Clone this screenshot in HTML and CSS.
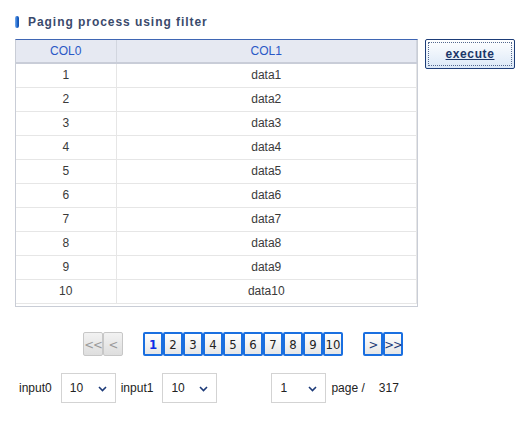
FILE: index.html
```html
<!DOCTYPE html>
<html>
<head>
<meta charset="utf-8">
<link rel="stylesheet" href="styles.css">
</head>
<body>
<div class="page">
  <h1 class="title"><span class="title-mark"></span>Paging process using filter</h1>
  <div class="main">
    <div class="grid">
      <table>
        <thead>
          <tr><th class="c0">COL0</th><th class="c1">COL1</th></tr>
        </thead>
        <tbody>
          <tr><td>1</td><td>data1</td></tr>
          <tr><td>2</td><td>data2</td></tr>
          <tr><td>3</td><td>data3</td></tr>
          <tr><td>4</td><td>data4</td></tr>
          <tr><td>5</td><td>data5</td></tr>
          <tr><td>6</td><td>data6</td></tr>
          <tr><td>7</td><td>data7</td></tr>
          <tr><td>8</td><td>data8</td></tr>
          <tr><td>9</td><td>data9</td></tr>
          <tr><td>10</td><td>data10</td></tr>
        </tbody>
      </table>
    </div>
    <button class="execute"><span class="execute-inner">execute</span></button>
  </div>
  <div class="pager">
    <div class="pbtn nav off">&lt;&lt;</div>
    <div class="pbtn nav off">&lt;</div>
    <div class="pages">
      <div class="pbtn sel">1</div>
      <div class="pbtn">2</div>
      <div class="pbtn">3</div>
      <div class="pbtn">4</div>
      <div class="pbtn">5</div>
      <div class="pbtn">6</div>
      <div class="pbtn">7</div>
      <div class="pbtn">8</div>
      <div class="pbtn">9</div>
      <div class="pbtn">10</div>
    </div>
    <div class="pbtn nav on">&gt;</div>
    <div class="pbtn nav on">&gt;&gt;</div>
  </div>
  <div class="controls">
    <span class="label">input0</span>
    <div class="combo"><span>10</span><svg class="chev" width="9" height="6" viewBox="0 0 9 6"><path d="M1 1 L4.5 4.5 L8 1" fill="none" stroke="#1c3a78" stroke-width="1.6"/></svg></div>
    <span class="label l2">input1</span>
    <div class="combo"><span>10</span><svg class="chev" width="9" height="6" viewBox="0 0 9 6"><path d="M1 1 L4.5 4.5 L8 1" fill="none" stroke="#1c3a78" stroke-width="1.6"/></svg></div>
    <div class="combo pagecombo"><span>1</span><svg class="chev" width="9" height="6" viewBox="0 0 9 6"><path d="M1 1 L4.5 4.5 L8 1" fill="none" stroke="#1c3a78" stroke-width="1.6"/></svg></div>
    <span class="label pg">page /</span>
    <span class="label total">317</span>
  </div>
</div>
</body>
</html>
```

FILE: styles.css
```css
* { box-sizing: border-box; }
body {
  margin: 0;
  background: #fff;
  font-family: "Liberation Sans", Arial, sans-serif;
  font-size: 12px;
  color: #333;
}
.page {
  padding: 15px 0 0 15px;
}
.title {
  margin: 0;
  display: flex;
  align-items: center;
  height: 14px;
  font-size: 12px;
  font-weight: bold;
  letter-spacing: 0.95px;
  color: #3a4a6c;
}
.title-mark {
  width: 4px;
  height: 12px;
  margin-right: 9px;
  border-radius: 2px;
  background: linear-gradient(90deg, #7ab0f0, #1b62c8 60%, #144fa8);
}
.main {
  display: flex;
  align-items: flex-start;
  margin-top: 10px;
}
.grid {
  width: 403px;
  height: 268px;
  border: 1px solid #c9cdd6;
  border-top: 1px solid #3f66b4;
  padding-right: 1px;
}
table {
  width: 401px;
  border-collapse: collapse;
  table-layout: fixed;
}
th {
  height: 23px;
  background: #e6e9f2;
  color: #2a58c6;
  font-weight: normal;
  border-bottom: 2px solid #c9cdd8;
  padding: 0;
}
th.c0 { width: 100px; border-right: 1px solid #d2d6df; }
th.c1 { border-right: 1px solid #d2d6df; }
td {
  height: 24px;
  padding: 0;
  text-align: center;
  color: #3a3a3a;
  border-bottom: 1px solid #e6e6e6;
  border-right: 1px solid #e6e6e6;
}
.execute {
  margin-left: 7px;
  width: 90px;
  height: 30px;
  padding: 2px;
  border: 1px solid #1d3d78;
  border-radius: 2px;
  background: linear-gradient(#ffffff, #dbe8f7);
  cursor: pointer;
  font-family: inherit;
}
.execute-inner {
  display: flex;
  align-items: center;
  justify-content: center;
  width: 100%;
  height: 100%;
  border: 1px dotted #55698f;
  font-size: 12px;
  font-weight: bold;
  letter-spacing: 0.6px;
  color: #1c3769;
  text-decoration: underline;
}
.pager {
  display: flex;
  margin-top: 25px;
  padding-left: 68px;
  height: 24px;
}
.pages {
  display: flex;
  margin: 0 20px;
}
.pbtn {
  width: 20px;
  height: 24px;
  display: flex;
  align-items: center;
  justify-content: center;
  border: 2px solid #1a6fe0;
  border-radius: 2px;
  background: linear-gradient(#ffffff, #e6e6e6);
  color: #222;
  font-size: 13px;
  font-family: "DejaVu Sans Condensed", "Liberation Sans Narrow", sans-serif;
}
.pbtn.sel { color: #0a2be8; font-weight: bold; }
.pbtn.nav { letter-spacing: -1px; font-size: 13px; }
.pbtn.off {
  border: 1px solid #c7c7c7;
  background: linear-gradient(#f2f2f2, #dedede);
  color: #9a9a9a;
}
.pbtn.on { color: #1c3a78; }
.controls {
  display: flex;
  align-items: center;
  margin-top: 17px;
  padding-left: 4px;
  height: 30px;
}
.label {
  font-size: 12px;
  color: #222;
}
.combo {
  width: 55px;
  height: 30px;
  border: 1px solid #d3d3d3;
  display: flex;
  align-items: center;
  justify-content: space-between;
  padding: 0 8px 0 8px;
  margin-left: 9px;
  color: #222;
}
.chev { margin-top: 1px; }
.label.l2 { margin-left: 5px; }
.combo.pagecombo { margin-left: 54px; }
.label.pg { margin-left: 5px; }
.label.total { margin-left: 14px; }
```
